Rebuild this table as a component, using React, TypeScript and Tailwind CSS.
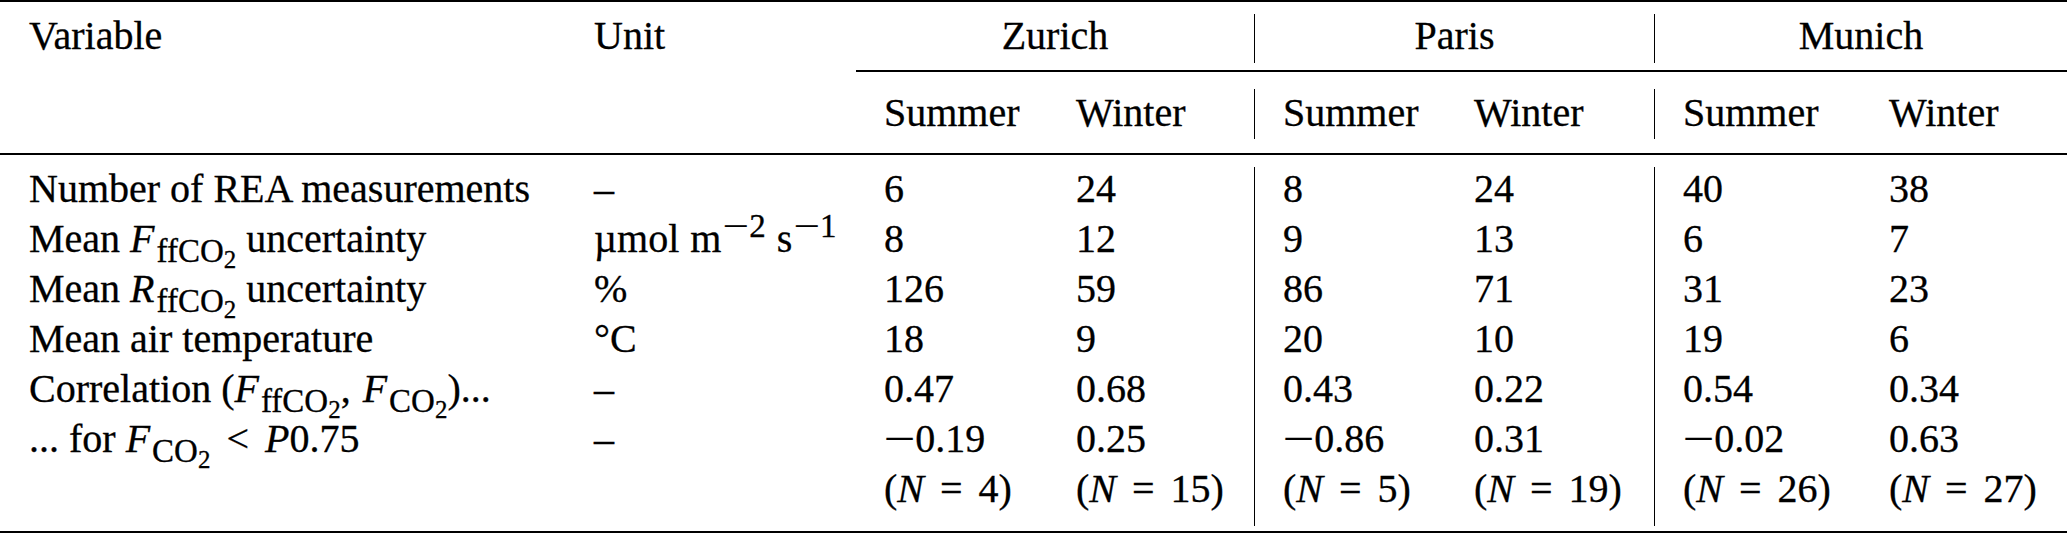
import React from 'react';

const cols = 'grid grid-cols-[594px_262px_192px_206px_1px_191px_208px_1px_206px_1fr]';

// math subscript (first and second level)
function Lo({ children }: { children: React.ReactNode }) {
  return <span className="relative top-[10px] ml-[2px] text-[33px] leading-none not-italic">{children}</span>;
}

function Lo2({ children }: { children: React.ReactNode }) {
  return <span className="relative top-[6px] text-[25px] leading-none">{children}</span>;
}

function Hi({ children }: { children: React.ReactNode }) {
  return <span className="relative -top-[15px] ml-[2px] text-[33px] leading-none">{children}</span>;
}

function Minus() {
  return <span className="inline-block w-[0.78em] text-center scale-x-[1.4]">−</span>;
}

function Gap({ w }: { w: string }) {
  return <span className={`inline-block ${w}`} />;
}

const ffCO2 = (
  <Lo>
    ffCO<Lo2>2</Lo2>
  </Lo>
);
const CO2 = (
  <Lo>
    CO<Lo2>2</Lo2>
  </Lo>
);

function N({ n }: { n: string }) {
  return (
    <span>
      (<i>N</i>
      <Gap w="w-[16px]" />=<Gap w="w-[16px]" />
      {n})
    </span>
  );
}

function Neg({ v }: { v: string }) {
  return (
    <span>
      <Minus />
      {v}
    </span>
  );
}

type Row = { label: React.ReactNode; unit: React.ReactNode; vals: React.ReactNode[] };

const rows: Row[] = [
  { label: 'Number of REA measurements', unit: '–', vals: ['6', '24', '8', '24', '40', '38'] },
  {
    label: (
      <>
        Mean <i>F</i>
        {ffCO2} uncertainty
      </>
    ),
    unit: (
      <>
        µmol<Gap w="w-[11px]" />m
        <Hi>
          <Minus />2
        </Hi>
        <Gap w="w-[11px]" />s
        <Hi>
          <Minus />1
        </Hi>
      </>
    ),
    vals: ['8', '12', '9', '13', '6', '7'],
  },
  {
    label: (
      <>
        Mean <i>R</i>
        {ffCO2} uncertainty
      </>
    ),
    unit: '%',
    vals: ['126', '59', '86', '71', '31', '23'],
  },
  { label: 'Mean air temperature', unit: '°C', vals: ['18', '9', '20', '10', '19', '6'] },
  {
    label: (
      <>
        Correlation (<i>F</i>
        {ffCO2},<Gap w="w-[12px]" />
        <i>F</i>
        {CO2})...
      </>
    ),
    unit: '–',
    vals: ['0.47', '0.68', '0.43', '0.22', '0.54', '0.34'],
  },
  {
    label: (
      <>
        ... for <i>F</i>
        {CO2}
        <Gap w="w-[16px]" />&lt;<Gap w="w-[16px]" />
        <i>P</i>0.75
      </>
    ),
    unit: '–',
    vals: [<Neg v="0.19" />, '0.25', <Neg v="0.86" />, '0.31', <Neg v="0.02" />, '0.63'],
  },
  {
    label: '',
    unit: '',
    vals: [<N n="4" />, <N n="15" />, <N n="5" />, <N n="19" />, <N n="26" />, <N n="27" />],
  },
];

export default function App() {
  return (
    <div className="w-[2067px] h-[533px] bg-white text-black text-[40px] [font-family:Liberation_Serif,Times_New_Roman,serif] [-webkit-text-stroke:0.3px_black] overflow-hidden">
      <div className="h-[2px] bg-black" />

      {/* city header */}
      <div className={`${cols} h-[68px] items-center leading-[50px]`}>
        <div className="pl-[29px]">Variable</div>
        <div>Unit</div>
        <div className="col-span-2 text-center">Zurich</div>
        <div className="self-stretch mt-[12px] mb-[7px] bg-black" />
        <div className="col-span-2 text-center">Paris</div>
        <div className="self-stretch mt-[12px] mb-[7px] bg-black" />
        <div className="col-span-2 text-center">Munich</div>
      </div>
      <div className="ml-[856px] h-[2px] bg-black" />

      {/* season header */}
      <div className={`${cols} h-[81px] items-center leading-[50px]`}>
        <div className="col-start-3 pl-[28px]">Summer</div>
        <div className="col-start-4 pl-[28px]">Winter</div>
        <div className="col-start-5 self-stretch mt-[17px] mb-[14px] bg-black" />
        <div className="col-start-6 pl-[28px]">Summer</div>
        <div className="col-start-7 pl-[28px]">Winter</div>
        <div className="col-start-8 self-stretch mt-[17px] mb-[14px] bg-black" />
        <div className="col-start-9 pl-[28px]">Summer</div>
        <div className="col-start-10 pl-[28px]">Winter</div>
      </div>
      <div className="h-[2px] bg-black" />

      {/* body */}
      <div className="pt-[9px] pb-[5px]">
        <div className={`${cols} grid-rows-[repeat(7,50px)_12px] leading-[50px] whitespace-nowrap`}>
          <div className="col-start-5 row-start-1 row-span-8 mt-[3px] bg-black" />
          <div className="col-start-8 row-start-1 row-span-8 mt-[3px] bg-black" />
          {rows.map((r, i) => (
            <React.Fragment key={i}>
              <div className="col-start-1 pl-[29px]" style={{ gridRowStart: i + 1 }}>
                {r.label}
              </div>
              <div className="col-start-2" style={{ gridRowStart: i + 1 }}>
                {r.unit}
              </div>
              {r.vals.map((v, j) => (
                <div
                  key={j}
                  className="pl-[28px]"
                  style={{ gridRowStart: i + 1, gridColumnStart: [3, 4, 6, 7, 9, 10][j] }}
                >
                  {v}
                </div>
              ))}
            </React.Fragment>
          ))}
        </div>
      </div>
      <div className="h-[2px] bg-black" />
    </div>
  );
}
